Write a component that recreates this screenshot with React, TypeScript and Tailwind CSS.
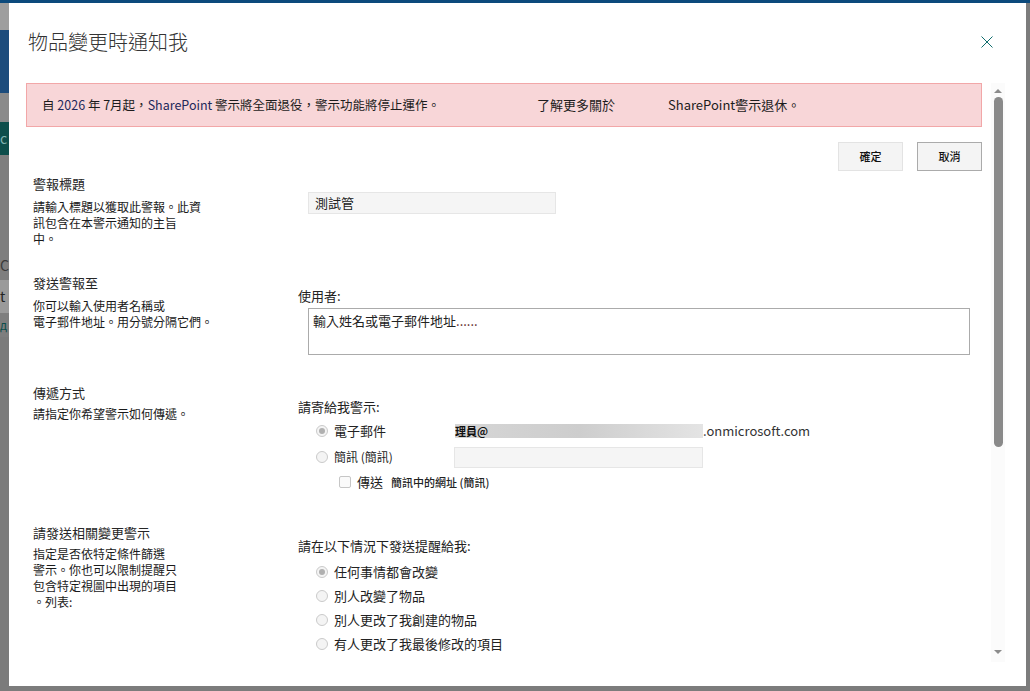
import { ReactNode } from "react";

function Radio({ checked = false }: { checked?: boolean }) {
  return (
    <span className="flex h-[12px] w-[12px] shrink-0 items-center justify-center rounded-full border border-[#cacaca] bg-[#f4f4f4]">
      {checked && <span className="h-[6px] w-[6px] rounded-full bg-[#b0b0b0]" />}
    </span>
  );
}

function RadioRow({ checked, children, className = "" }: { checked?: boolean; children: ReactNode; className?: string }) {
  return (
    <div className={`flex items-center gap-[6px] pl-[18px] ${className}`}>
      <Radio checked={checked} />
      {children}
    </div>
  );
}

function SideText({ title, lines, gap = "mt-[5px]" }: { title: string; lines: string[]; gap?: string }) {
  return (
    <div className="w-[272px] shrink-0 pl-[7px]">
      <div className="text-[13px] leading-[18px] text-[#262626]">{title}</div>
      <div className={`${gap} text-[12px] leading-[16px] text-[#1a1a1a]`}>
        {lines.map((line) => (
          <div key={line}>{line}</div>
        ))}
      </div>
    </div>
  );
}

function Scrollbar() {
  return (
    <div className="flex h-[579px] w-[14px] shrink-0 flex-col items-center bg-[#fbfbfb] pt-[6px]">
      <div className="h-0 w-0 border-x-[4px] border-b-[4px] border-x-transparent border-b-[#8c8c8c]" />
      <div className="mt-[4px] h-[350px] w-[9px] rounded-full bg-[#8a8a8a]" />
      <div className="flex-1" />
      <div className="mb-[8px] h-0 w-0 border-x-[4px] border-t-[4px] border-x-transparent border-t-[#8c8c8c]" />
    </div>
  );
}

function Backdrop() {
  return (
    <div className="flex h-full w-[9px] flex-col">
      <div className="h-[27px] bg-[#9e9e9e]" />
      <div className="h-[63px] bg-[#1c4c7c]" />
      <div className="h-[29px] bg-[#8a8a8a]" />
      <div className="h-[33px] bg-[#0d4e4b] text-[14px] leading-[33px] text-[#7fb3b0]">c</div>
      <div className="h-[95px] bg-[#7e7e7e]" />
      <div className="h-[30px] bg-[#7e7e7e] text-[14px] leading-[30px] text-[#3a3a3a]">C</div>
      <div className="h-[33px] bg-[#9a9a9a] text-[14px] leading-[33px] text-[#222]">t</div>
      <div className="h-[24px] bg-[#7e7e7e] text-[12px] leading-[24px] text-[#0d4e4b]">д</div>
      <div className="flex-1 bg-[#7b7b7b]" />
    </div>
  );
}

export default function App() {
  return (
    <div className="relative h-[691px] w-[1030px] overflow-hidden bg-[#7c7c7c] font-['Noto_Sans_CJK_TC','Noto_Sans',sans-serif]">
      <div className="h-[3px] bg-[#0c4a7c]" />
      <div className="h-[688px]">
        <Backdrop />
      </div>

      <div className="absolute left-[9px] top-[3px] flex h-[683px] w-[1017px] flex-col bg-white">
        <div className="flex h-[80px] items-start justify-between pl-[19px] pr-[33px] pt-[25px]">
          <h1 className="text-[20px] font-light leading-[28px] text-[#333]">物品變更時通知我</h1>
          <svg width="12" height="12" viewBox="0 0 12 12" className="mt-[8px]">
            <path d="M0.5 0.5 L11.5 11.5 M11.5 0.5 L0.5 11.5" stroke="#106d6d" strokeWidth="1" fill="none" />
          </svg>
        </div>

        <div className="flex gap-[9px] pl-[17px] pr-[21px]">
          <div className="h-[579px] flex-1 overflow-hidden">
            <div className="flex h-[44px] items-center border border-[#f2a7a8] bg-[#f8d6d8] pl-[15px] text-[13px] text-[#1c1c1c]">
              <span className="w-[495px] shrink-0 whitespace-nowrap text-[12.5px]">
                自 <span className="text-[#23285a]">2026</span> 年 7月起，<span className="text-[#23285a]">SharePoint</span> 警示將全面退役，警示功能將停止運作。
              </span>
              <span className="w-[131px] shrink-0">了解更多關於</span>
              <span className="whitespace-nowrap">SharePoint警示退休。</span>
            </div>

            <div className="mt-[15px] flex justify-end gap-[14px]">
              <button className="h-[29px] w-[65px] border border-[#e3e3e3] bg-[#f4f4f4] text-[11px] font-medium text-[#111]">確定</button>
              <button className="h-[29px] w-[65px] border border-[#ababab] bg-[#f4f4f4] text-[11px] font-medium text-[#111]">取消</button>
            </div>

            <div className="mt-[4px] flex h-[99px]">
              <SideText title="警報標題" lines={["請輸入標題以獲取此警報。此資", "訊包含在本警示通知的主旨", "中。"]} gap="mt-[6px]" />
              <div className="pl-[10px] pt-[17px]">
                <div className="flex h-[22px] w-[248px] items-center border border-[#e6e6e6] bg-[#f5f5f5] pl-[6px] text-[13px] text-[#222]">
                  測試管
                </div>
              </div>
            </div>

            <div className="flex h-[110px]">
              <SideText title="發送警報至" lines={["你可以輸入使用者名稱或", "電子郵件地址。用分號分隔它們。"]} gap="mt-[6px]" />
              <div className="flex-1 pt-[13px]">
                <div className="text-[13px] leading-[18px] text-[#222]">使用者:</div>
                <div className="ml-[10px] mt-[3px] h-[47px] w-[662px] border border-[#ababab] pl-[4px] pt-[2px] text-[13px] leading-[20px] text-[#222]">
                  輸入姓名或電子郵件地址<span className="text-[#5a2020]">......</span>
                </div>
              </div>
            </div>

            <div className="flex h-[140px]">
              <SideText title="傳遞方式" lines={["請指定你希望警示如何傳遞。"]} gap="mt-[4px]" />
              <div className="flex-1 pt-[14px]">
                <div className="text-[13px] leading-[18px] text-[#222]">請寄給我警示:</div>
                <RadioRow checked className="mt-[4px] h-[22px]">
                  <span className="w-[115px] text-[13px] text-[#222]">電子郵件</span>
                  <div className="flex items-center">
                    <div className="flex h-[14px] w-[248px] items-center bg-linear-to-r from-[#d6d6d6] via-[#cdcdcd] to-[#e4e4e4] text-[11px] font-bold text-[#111]">
                      理員@
                    </div>
                    <span className="text-[13px] text-[#333]">.onmicrosoft.com</span>
                  </div>
                </RadioRow>
                <RadioRow className="mt-[4px] h-[22px]">
                  <span className="w-[114px] text-[12px] text-[#222]">簡訊 (簡訊)</span>
                  <div className="h-[21px] w-[249px] border border-[#e6e6e6] bg-[#f5f5f5]" />
                </RadioRow>
                <div className="mt-[4px] flex h-[20px] items-center pl-[41px]">
                  <span className="h-[12px] w-[12px] rounded-[2px] border border-[#c6c6c6] bg-[#fafafa]" />
                  <span className="ml-[6px] text-[13px] text-[#222]">傳送</span>
                  <span className="ml-[8px] text-[11px] font-medium text-[#222]">簡訊中的網址 (簡訊)</span>
                </div>
              </div>
            </div>

            <div className="flex">
              <SideText
                title="請發送相關變更警示"
                lines={["指定是否依特定條件篩選", "警示。你也可以限制提醒只", "包含特定視圖中出現的項目", "。列表:"]}
                gap="mt-[4px]"
              />
              <div className="flex-1 pt-[13px]">
                <div className="text-[13px] leading-[18px] text-[#222]">請在以下情況下發送提醒給我:</div>
                <div className="mt-[5px] text-[13px] text-[#222]">
                  <RadioRow checked className="h-[24px]">任何事情都會改變</RadioRow>
                  <RadioRow className="h-[24px]">別人改變了物品</RadioRow>
                  <RadioRow className="h-[24px]">別人更改了我創建的物品</RadioRow>
                  <RadioRow className="h-[24px]">有人更改了我最後修改的項目</RadioRow>
                </div>
              </div>
            </div>
          </div>
          <Scrollbar />
        </div>
      </div>
    </div>
  );
}
